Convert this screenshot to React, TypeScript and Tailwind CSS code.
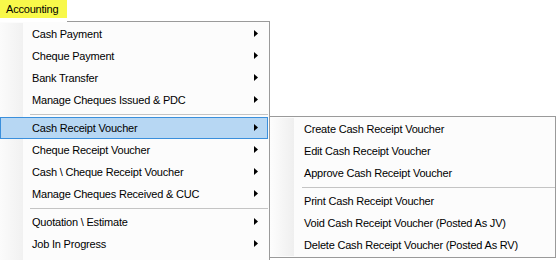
import React from "react";

type Entry = { label: string; arrow?: boolean; active?: boolean } | "sep";

const mainItems: Entry[] = [
  { label: "Cash Payment", arrow: true },
  { label: "Cheque Payment", arrow: true },
  { label: "Bank Transfer", arrow: true },
  { label: "Manage Cheques Issued & PDC", arrow: true },
  "sep",
  { label: "Cash Receipt Voucher", arrow: true, active: true },
  { label: "Cheque Receipt Voucher", arrow: true },
  { label: "Cash \\ Cheque Receipt Voucher", arrow: true },
  { label: "Manage Cheques Received & CUC", arrow: true },
  "sep",
  { label: "Quotation \\ Estimate", arrow: true },
  { label: "Job In Progress", arrow: true },
];

const subItems: Entry[] = [
  { label: "Create Cash Receipt Voucher" },
  { label: "Edit Cash Receipt Voucher" },
  { label: "Approve Cash Receipt Voucher" },
  "sep",
  { label: "Print Cash Receipt Voucher" },
  { label: "Void Cash Receipt Voucher (Posted As JV)" },
  { label: "Delete Cash Receipt Voucher (Posted As RV)" },
];

function Arrow() {
  return (
    <svg width="4" height="7" viewBox="0 0 4 7" className="shrink-0">
      <polygon points="0,0 4,3.5 0,7" fill="#000" />
    </svg>
  );
}

function MenuList({
  items,
  textLeft,
  sepLeft,
}: {
  items: Entry[];
  textLeft: string;
  sepLeft: string;
}) {
  return (
    <div className="flex flex-col">
      {items.map((item, i) =>
        item === "sep" ? (
          <div key={i} className={`h-[6px] pt-[3px] ${sepLeft}`}>
            <div className="h-px bg-[#c4c4c4]" />
          </div>
        ) : (
          <div
            key={i}
            className={`relative flex h-[22px] items-center ${
              item.active ? "border border-[#3a8fdc] bg-[#b7d7f3]" : ""
            }`}
          >
            <span className={`${textLeft} ${item.active ? "-ml-px" : ""}`}>
              {item.label}
            </span>
            {item.arrow && (
              <span
                className={`absolute ${
                  item.active ? "left-[253px] top-[6px]" : "left-[254px] top-[7px]"
                }`}
              >
                <Arrow />
              </span>
            )}
          </div>
        )
      )}
    </div>
  );
}

export default function App() {
  return (
    <div
      className="relative h-[260px] w-[558px] overflow-hidden bg-white text-[11px] tracking-[-0.2px] text-black"
      style={{ fontFamily: '"Liberation Sans", Arial, sans-serif' }}
    >
      <div className="flex h-[18px] w-[67px] items-center bg-[#f8f84a] pl-[6px]">
        Accounting
      </div>
      <div className="mt-[3px] flex items-start">
        {/* main dropdown */}
        <div className="relative h-[260px] w-[270px] border-r border-t border-[#9a9a9a] bg-[#fcfcfc] pr-px pt-px">
          <div className="absolute left-0 top-px bottom-0 w-[23px] bg-gradient-to-r from-[#fbfbfb] to-[#f1f1f1]" />
          <div className="absolute left-0 top-[-1px] h-px w-[67px] bg-white" />
          <div className="relative">
            <MenuList items={mainItems} textLeft="pl-[32px]" sepLeft="pl-[30px]" />
          </div>
        </div>
        {/* submenu */}
        <div className="relative -ml-px mt-[95px] w-[287px] border border-[#9a9a9a] bg-[#fcfcfc] py-px">
          <div className="absolute left-0 top-px bottom-px w-[24px] bg-gradient-to-r from-[#fdfdfd] to-[#efefef]" />
          <div className="relative">
            <MenuList items={subItems} textLeft="pl-[34px]" sepLeft="pl-[32px]" />
          </div>
        </div>
      </div>
    </div>
  );
}
